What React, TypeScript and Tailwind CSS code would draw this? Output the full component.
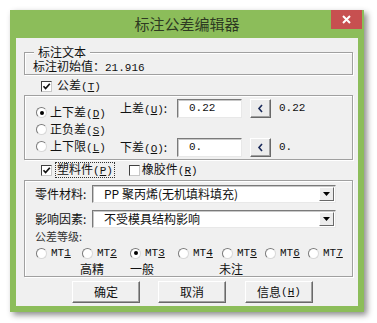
import React from 'react';

const MONO = "font-['Liberation_Mono',monospace]";

const Hot = ({ c }: { c: string }) => (
  <span className={`${MONO} text-[11px]`}>
    (<u>{c}</u>)
  </span>
);

const Radio = ({ on }: { on?: boolean }) => (
  <span className="flex h-[11px] w-[11px] shrink-0 items-center justify-center rounded-full border border-t-[#7a7a7a] border-l-[#7a7a7a] border-r-[#d8d8d8] border-b-[#d8d8d8] bg-white">
    {on && <span className="h-[4px] w-[4px] rounded-full bg-black" />}
  </span>
);

const Check = ({ on }: { on?: boolean }) => (
  <span className="flex h-[11px] w-[11px] shrink-0 items-center justify-center border border-t-[#404040] border-l-[#404040] border-r-[#c8c8c8] border-b-[#c8c8c8] bg-white">
    {on && (
      <svg width="9" height="9" viewBox="0 0 9 9">
        <path d="M1.5 4.2 L3.6 6.5 L7.8 1.8" stroke="#111" strokeWidth="1.7" fill="none" />
      </svg>
    )}
  </span>
);

const Group = ({ title, className, children }: { title?: string; className?: string; children?: React.ReactNode }) => (
  <div className={`relative w-[329px] border border-[#a0a0a0] shadow-[inset_1px_1px_0_#fff,1px_1px_0_#fff] ${className ?? ''}`}>
    {title && (
      <span className="absolute left-[9px] top-[-7px] bg-[#f0f0f0] px-[4px] text-[12px] leading-[12px]">{title}</span>
    )}
    {children}
  </div>
);

const Sunken = ({ className, children }: { className?: string; children?: React.ReactNode }) => (
  <div className={`flex items-center border border-t-[#7a7a7a] border-l-[#7a7a7a] border-r-[#e8e8e8] border-b-[#e8e8e8] bg-white shadow-[inset_1px_1px_0_#c8c8c8] ${className ?? ''}`}>
    {children}
  </div>
);

const SmallBtn = () => (
  <div className="ml-[8px] flex h-[19px] w-[21px] items-center justify-center border border-t-white border-l-white border-r-[#696969] border-b-[#696969] bg-[#ececec] shadow-[inset_-1px_-1px_0_#a0a0a0]">
    <svg width="7" height="9" viewBox="0 0 7 9">
      <path d="M5 1 L2 4.5 L5 8" stroke="#1a2a5a" strokeWidth="1.6" fill="none" />
    </svg>
  </div>
);

const Combo = ({ text }: { text: string }) => (
  <Sunken className="h-[18px] w-[244px] justify-between">
    <span className="pl-[11px] text-[12px] leading-[14px] whitespace-nowrap">{text}</span>
    <span className="mr-[1px] flex h-[14px] w-[15px] items-center justify-center border border-t-white border-l-white border-r-[#696969] border-b-[#696969] bg-[#ececec]">
      <svg width="7" height="4" viewBox="0 0 7 4">
        <path d="M0 0 H7 L3.5 4 Z" fill="#000" />
      </svg>
    </span>
  </Sunken>
);

const Button = ({ children, className }: { children: React.ReactNode; className?: string }) => (
  <div className={`flex h-[22px] w-[68px] items-center justify-center border border-t-white border-l-white border-r-[#696969] border-b-[#696969] bg-[#f0f0f0] shadow-[inset_-1px_-1px_0_#a0a0a0] text-[12px] leading-[14px] ${className ?? ''}`}>
    {children}
  </div>
);

const mtWidths = ['w-[46px]', 'w-[48px]', 'w-[48px]', 'w-[44px]', 'w-[43px]', 'w-[43px]', 'w-[40px]'];

export default function App() {
  return (
    <div className="h-[323px] w-[377px] bg-white pl-[10px] pt-[10px] font-['Noto_Sans_CJK_SC',sans-serif] text-[#111]">
      {/* window frame */}
      <div className="flex h-[302px] w-[354px] flex-col bg-[#8cbd5a] px-[6px] pb-[6px] shadow-[3px_3px_6px_rgba(0,0,0,0.45)]">
        {/* title bar */}
        <div className="relative flex h-[28px] shrink-0 items-center justify-center">
          <span className="text-[15px] leading-[18px] text-[#2e3a22]">标注公差编辑器</span>
          <div className="absolute right-[-4px] top-0 flex h-[19px] w-[31px] items-center justify-center bg-[#c75050]">
            <svg width="9" height="9" viewBox="0 0 9 9">
              <path d="M1 1 L8 8 M8 1 L1 8" stroke="#fff" strokeWidth="2" />
            </svg>
          </div>
        </div>

        {/* client area */}
        <div className="flex flex-1 flex-col bg-[#f0f0f0] pl-[8px]">
          <Group title="标注文本" className="mt-[14px] h-[23px]">
            <div className="pl-[8px] pt-[6px] text-[12px] leading-[13px]">
              标注初始值：<span className={`${MONO} text-[11px]`}>21.916</span>
            </div>
          </Group>

          <div className="mt-[4px] flex h-[14px] items-center pl-[17px]">
            <Check on />
            <span className="ml-[5px] text-[12px] leading-[14px]">
              公差<Hot c="T" />
            </span>
          </div>

          <Group className="mt-[2px] flex h-[65px]">
            <div className="flex w-[95px] flex-col pl-[11px] pt-[8px]">
              {[
                ['上下差', 'D', true],
                ['正负差', 'S', false],
                ['上下限', 'L', false],
              ].map(([t, k, on]) => (
                <div key={t as string} className="flex h-[17px] items-center">
                  <Radio on={on as boolean} />
                  <span className="ml-[3px] text-[12px] leading-[14px] whitespace-nowrap">
                    {t}
                    <Hot c={k as string} />
                  </span>
                </div>
              ))}
            </div>
            <div className="flex flex-col pt-[3px]">
              <div className="flex h-[19px] items-center">
                <span className="w-[57px] text-[12px] leading-[14px] whitespace-nowrap">
                  上差<Hot c="U" />:
                </span>
                <Sunken className="h-[19px] w-[65px]">
                  <span className={`${MONO} pl-[11px] text-[11px]`}>0.22</span>
                </Sunken>
                <SmallBtn />
                <span className={`${MONO} ml-[8px] text-[11px]`}>0.22</span>
              </div>
              <div className="mt-[20px] flex h-[19px] items-center">
                <span className="w-[57px] text-[12px] leading-[14px] whitespace-nowrap">
                  下差<Hot c="O" />:
                </span>
                <Sunken className="h-[19px] w-[65px]">
                  <span className={`${MONO} pl-[11px] text-[11px]`}>0.</span>
                </Sunken>
                <SmallBtn />
                <span className={`${MONO} ml-[8px] text-[11px]`}>0.</span>
              </div>
            </div>
          </Group>

          <div className="mt-[3px] flex h-[14px] items-center pl-[17px]">
            <Check on />
            <span className="ml-[3px] border border-dotted border-[#333] px-[1px] text-[12px] leading-[12px]">
              塑料件<Hot c="P" />
            </span>
            <span className="ml-[14px]">
              <Check />
            </span>
            <span className="ml-[2px] text-[12px] leading-[14px]">
              橡胶件<Hot c="R" />
            </span>
          </div>

          <Group className="mt-[3px] flex h-[97px] flex-col">
            <div className="mt-[4px] flex h-[18px] items-center pl-[10px]">
              <span className="w-[57px] text-[12px] leading-[14px]">零件材料:</span>
              <Combo text="PP  聚丙烯(无机填料填充)" />
            </div>
            <div className="mt-[7px] flex h-[18px] items-center pl-[10px]">
              <span className="w-[57px] text-[12px] leading-[14px]">影响因素:</span>
              <Combo text="不受模具结构影响" />
            </div>
            <div className="mt-[2px] h-[12px] pl-[10px] text-[11px] leading-[12px] text-[#333]">公差等级:</div>
            <div className="mt-[4px] flex h-[14px] items-center pl-[11px]">
              {[1, 2, 3, 4, 5, 6, 7].map((n, i) => (
                <div key={n} className={`flex items-center ${mtWidths[i]}`}>
                  <Radio on={n === 3} />
                  <span className={`${MONO} ml-[4px] text-[11px] leading-[12px]`}>
                    MT<u>{n}</u>
                  </span>
                </div>
              ))}
            </div>
            <div className="mt-[3px] flex h-[12px] text-[12px] leading-[12px]">
              <span className="ml-[55px]">高精</span>
              <span className="ml-[26px]">一般</span>
              <span className="ml-[65px]">未注</span>
            </div>
          </Group>

          <div className="mt-[4px] flex">
            <Button className="ml-[48px]">确定</Button>
            <Button className="ml-[18px]">取消</Button>
            <Button className="ml-[19px]">
              信息<Hot c="H" />
            </Button>
          </div>
        </div>
      </div>
    </div>
  );
}
